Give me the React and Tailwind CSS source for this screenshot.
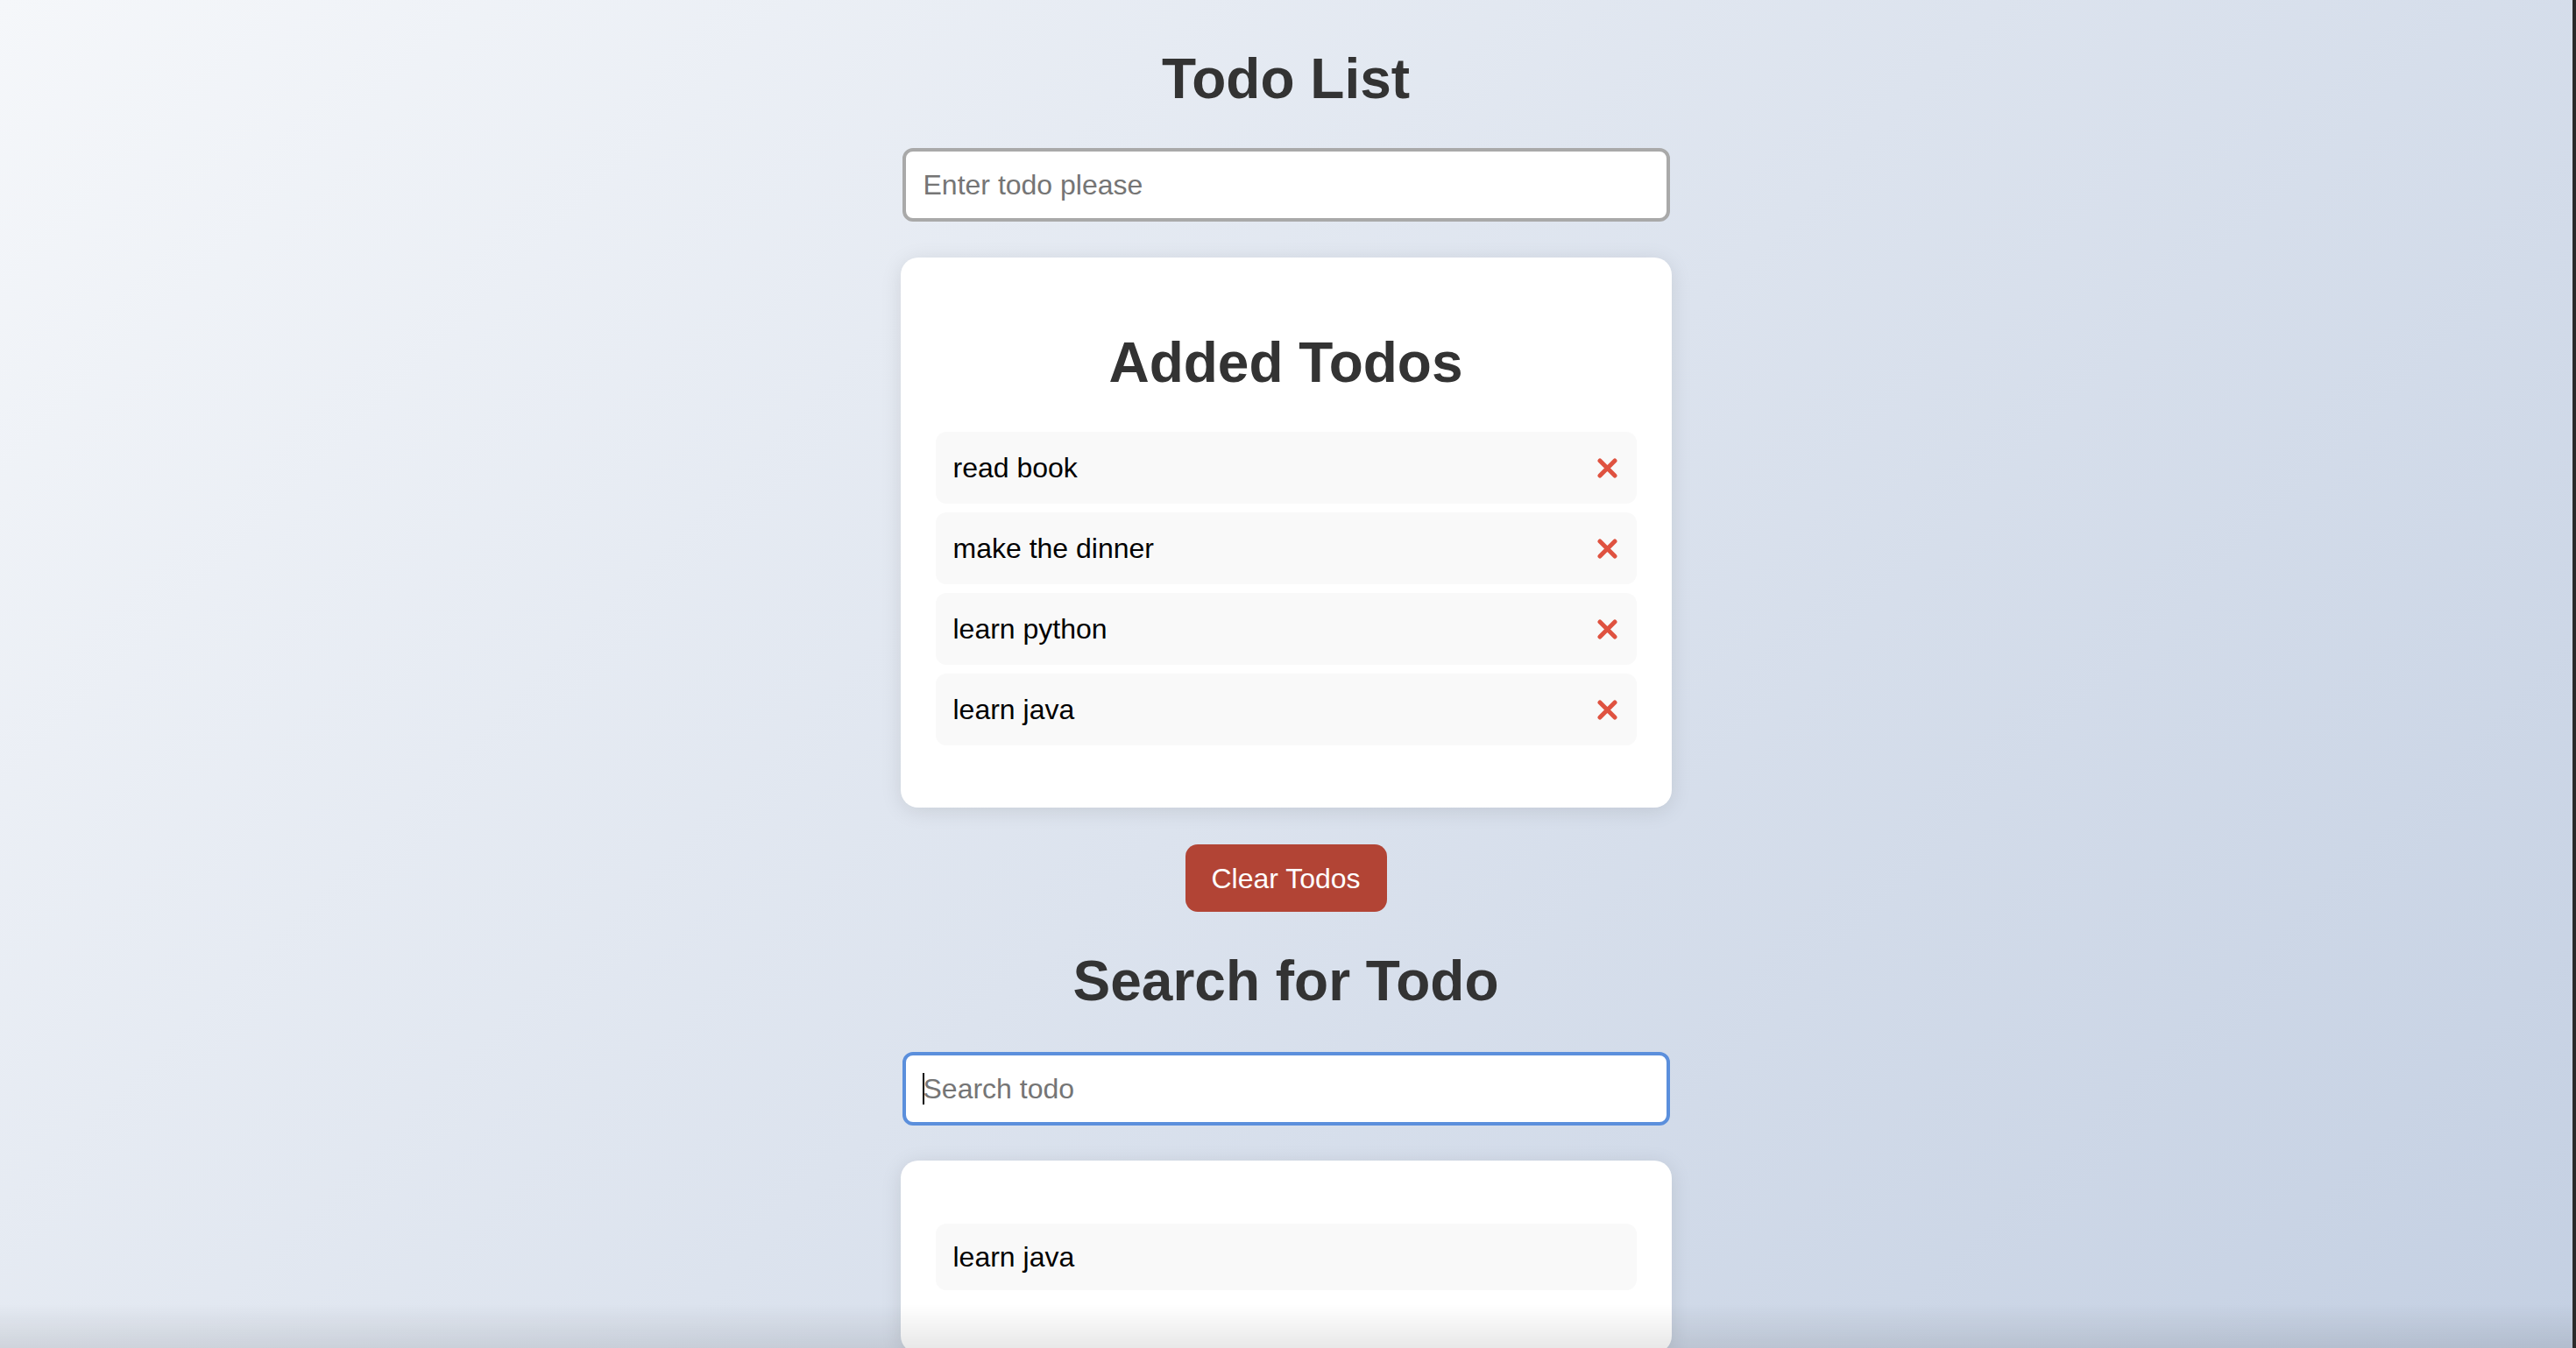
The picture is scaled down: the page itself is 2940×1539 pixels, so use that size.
import React from "react";

const todos = ["read book", "make the dinner", "learn python", "learn java"];

function XIcon() {
  return (
    <svg width="23" height="23" viewBox="0 0 23 23" className="shrink-0">
      <path d="M3 3 L20 20 M20 3 L3 20" stroke="#df5240" strokeWidth="5" strokeLinecap="round" fill="none" />
    </svg>
  );
}

export default function App() {
  return (
    <div
      className="relative min-h-screen w-full overflow-hidden bg-[linear-gradient(135deg,#f5f7fa_0%,#c3cfe2_100%)]"
      style={{ fontFamily: '"Liberation Sans", Arial, sans-serif' }}
    >
      <div className="flex flex-col items-center pt-[53px] pb-[80px] pr-[5px]">
        <h1 className="text-[64px] leading-[74px] font-bold text-[#333]">Todo List</h1>

        <input
          type="text"
          placeholder="Enter todo please"
          className="mt-[42px] w-[876px] h-[84px] px-[20px] border-[4px] border-[#a9a9a9] rounded-[12px] bg-white text-[32px] leading-[36px] text-black placeholder:text-[#757575] outline-none"
        />

        <div className="mt-[41px] w-[880px] bg-white rounded-[20px] shadow-[0_4px_24px_rgba(0,0,0,0.1)] px-[40px] pt-[40px] pb-[71px] flex flex-col">
          <h2 className="mt-[43px] text-center text-[64px] leading-[74px] font-bold text-[#333]">Added Todos</h2>
          <ul className="mt-[42px] flex flex-col gap-[10px]">
            {todos.map((t) => (
              <li
                key={t}
                className="h-[82px] bg-[#f9f9f9] rounded-[12px] pl-[20px] pr-[22px] flex items-center justify-between"
              >
                <span className="text-[32px] leading-[36px] text-black">{t}</span>
                <XIcon />
              </li>
            ))}
          </ul>
        </div>

        <button className="mt-[42px] w-[230px] h-[77px] rounded-[14px] bg-[#b24435] text-white text-[32px] leading-[36px]">
          Clear Todos
        </button>

        <h1 className="mt-[42px] text-[64px] leading-[74px] font-bold text-[#333]">Search for Todo</h1>

        <div className="relative mt-[44px]">
          <input
            type="text"
            placeholder="Search todo"
            className="w-[876px] h-[84px] px-[20px] border-[4px] border-[#5b8fdc] rounded-[12px] bg-white text-[32px] leading-[36px] text-black placeholder:text-[#757575] outline-none"
          />
          <span className="pointer-events-none absolute left-[23px] top-[24px] w-[2px] h-[36px] bg-black" />
        </div>

        <div className="mt-[40px] w-[880px] bg-white rounded-[20px] shadow-[0_4px_24px_rgba(0,0,0,0.1)] px-[40px] pt-[72px] pb-[72px]">
          <ul className="flex flex-col gap-[10px]">
            <li className="h-[76px] bg-[#f9f9f9] rounded-[12px] pl-[20px] flex items-center">
              <span className="text-[32px] leading-[36px] text-black">learn java</span>
            </li>
          </ul>
        </div>
      </div>

      <div className="pointer-events-none fixed left-0 right-0 bottom-0 h-[50px] bg-[linear-gradient(to_bottom,rgba(0,0,0,0)_0%,rgba(0,0,0,0.09)_100%)]" />
      <div className="pointer-events-none fixed right-0 top-0 h-screen w-[4px] bg-[#2a2a2a]" />
    </div>
  );
}
